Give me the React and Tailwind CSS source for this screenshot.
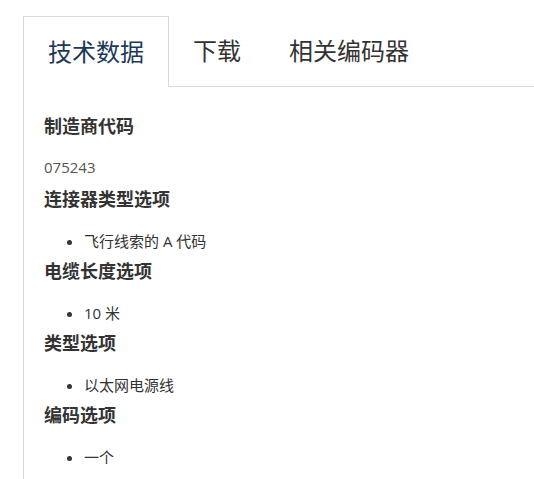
const TABS = ['技术数据', '下载', '相关编码器'];

const SECTIONS = [
  { title: '制造商代码', text: '075243' },
  { title: '连接器类型选项', items: ['飞行线索的 A 代码'] },
  { title: '电缆长度选项', items: ['10 米'] },
  { title: '类型选项', items: ['以太网电源线'] },
  { title: '编码选项', items: ['一个'] },
];

export default function App() {
  return (
    <div className="min-h-screen bg-white pt-4 pl-[23px] text-[#333] font-['Open_Sans','Noto_Sans_CJK_SC',sans-serif]">
      {/* Tabs */}
      <div className="flex">
        {TABS.map((tab, i) => (
          <div
            key={tab}
            className={
              i === 0
                ? 'h-[71px] px-[24px] flex items-center text-[24px] text-[#1c3a57] border border-b-0 border-[#d9d9d9]'
                : 'h-[71px] px-[24px] flex items-center text-[24px] text-[#333] border-b border-[#d9d9d9]'
            }
          >
            {tab}
          </div>
        ))}
        <div className="flex-1 border-b border-[#d9d9d9]" />
      </div>

      {/* Tab content */}
      <div className="border-l border-[#d9d9d9] pl-[20px] pt-[26px] pb-4">
        {SECTIONS.map((s) => (
          <div key={s.title}>
            <h3 className={`text-[18px] leading-[26px] font-bold text-[#333] ${s.text ? 'mb-[17px]' : 'mb-[18px]'}`}>{s.title}</h3>
            {s.text && <p className="text-[15px] leading-[22px] text-[#555] mb-[8px]">{s.text}</p>}
            {s.items && (
              <ul className="list-disc pl-[40px] mb-[6px]">
                {s.items.map((it) => (
                  <li key={it} className="text-[15px] leading-[22px] text-[#333]">{it}</li>
                ))}
              </ul>
            )}
          </div>
        ))}
      </div>
    </div>
  );
}
